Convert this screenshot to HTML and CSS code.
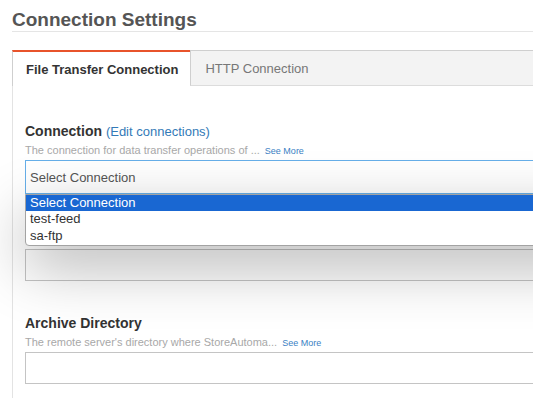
FILE: index.html
```html
<!DOCTYPE html>
<html>
<head>
<meta charset="utf-8">
<link rel="stylesheet" href="styles.css">
</head>
<body>
<div class="page">
  <h1 class="title">Connection Settings</h1>
  <div class="tabs">
    <div class="tab tab-active">File Transfer Connection</div>
    <div class="tab tab-idle">HTTP Connection</div>
  </div>
  <div class="panel">
    <div class="field">
      <div class="label">Connection <a class="edit">(Edit connections)</a></div>
      <div class="help">The connection for data transfer operations of ... <a class="more">See More</a></div>
      <div class="select-wrap">
        <div class="select">Select Connection</div>
        <ul class="listbox">
          <li class="option selected">Select Connection</li>
          <li class="option">test-feed</li>
          <li class="option">sa-ftp</li>
        </ul>
      </div>
    </div>
    <div class="field field-mid">
      <div class="label">Remote Directory</div>
      <div class="help">The remote server's directory where files are read from... <a class="more">See More</a></div>
      <div class="input"></div>
    </div>
    <div class="field field-archive">
      <div class="label">Archive Directory</div>
      <div class="help">The remote server's directory where StoreAutoma... <a class="more">See More</a></div>
      <div class="input"></div>
    </div>
  </div>
</div>
</body>
</html>
```
FILE: styles.css
```css
html, body {
  margin: 0;
  padding: 0;
  overflow: hidden;
  background: #fff;
}
body {
  font-family: "Liberation Sans", Arial, sans-serif;
  color: #333;
}
.page {
  width: 720px;
  padding-left: 12px;
}
.title {
  margin: 9px 0 0;
  font-size: 19px;
  line-height: 22px;
  font-weight: bold;
  color: #555;
  border-bottom: 1px solid #e5e5e5;
}
.tabs {
  display: flex;
  margin-top: 18px;
  height: 36px;
}
.tab {
  display: flex;
  align-items: center;
  box-sizing: border-box;
  height: 36px;
  font-size: 13px;
}
.tab-active {
  border-top: 2px solid #e8532b;
  border-left: 1px solid #cfcfcf;
  padding: 0 12px 0 13px;
  font-weight: bold;
  color: #333;
  background: #fff;
}
.tab-idle {
  flex: 1;
  border-top: 1px solid #cfcfcf;
  border-left: 1px solid #cfcfcf;
  border-bottom: 1px solid #dcdcdc;
  padding: 0 14px;
  background: #f3f3f3;
  color: #777;
}
.panel {
  border-left: 1px solid #e3e3e3;
  padding: 35px 0 30px 12px;
}
.label {
  font-size: 14px;
  line-height: 20px;
  height: 20px;
  font-weight: bold;
  color: #333;
}
.edit {
  font-size: 13px;
  font-weight: normal;
  color: #337ab7;
}
.help {
  margin-top: 2px;
  font-size: 11px;
  line-height: 14px;
  height: 14px;
  color: #a8a8a8;
  white-space: nowrap;
}
.more {
  margin-left: 2px;
  font-size: 9px;
  line-height: 1;
  color: #3b7fc4;
}
.select-wrap {
  position: relative;
  margin-top: 3px;
}
.select {
  box-sizing: border-box;
  height: 34px;
  border: 1px solid #66afe9;
  padding-left: 4px;
  display: flex;
  align-items: center;
  font-size: 13px;
  color: #555;
  background: #fff;
}
.listbox {
  position: absolute;
  left: 0;
  right: 0;
  top: 34px;
  margin: 0;
  padding: 0 0 1px;
  list-style: none;
  background: #fff;
  border: 1px solid #a3a3a3;
  border-radius: 0 0 4px 4px;
  box-shadow: 0 20px 60px rgba(0, 0, 0, 0.3);
  z-index: 5;
}
.option {
  height: 16px;
  line-height: 16px;
  padding-left: 4px;
  font-size: 13px;
  color: #333;
}
.option + .option {
  height: 16.5px;
}
.selected {
  background: #1967d2;
  color: #fff;
}
.field-mid {
  margin-top: 16px;
}
.field-archive {
  margin-top: 32px;
}
.input {
  box-sizing: border-box;
  height: 32px;
  margin-top: 3px;
  border: 1px solid #c4c4c4;
  background: #fff;
}
```
